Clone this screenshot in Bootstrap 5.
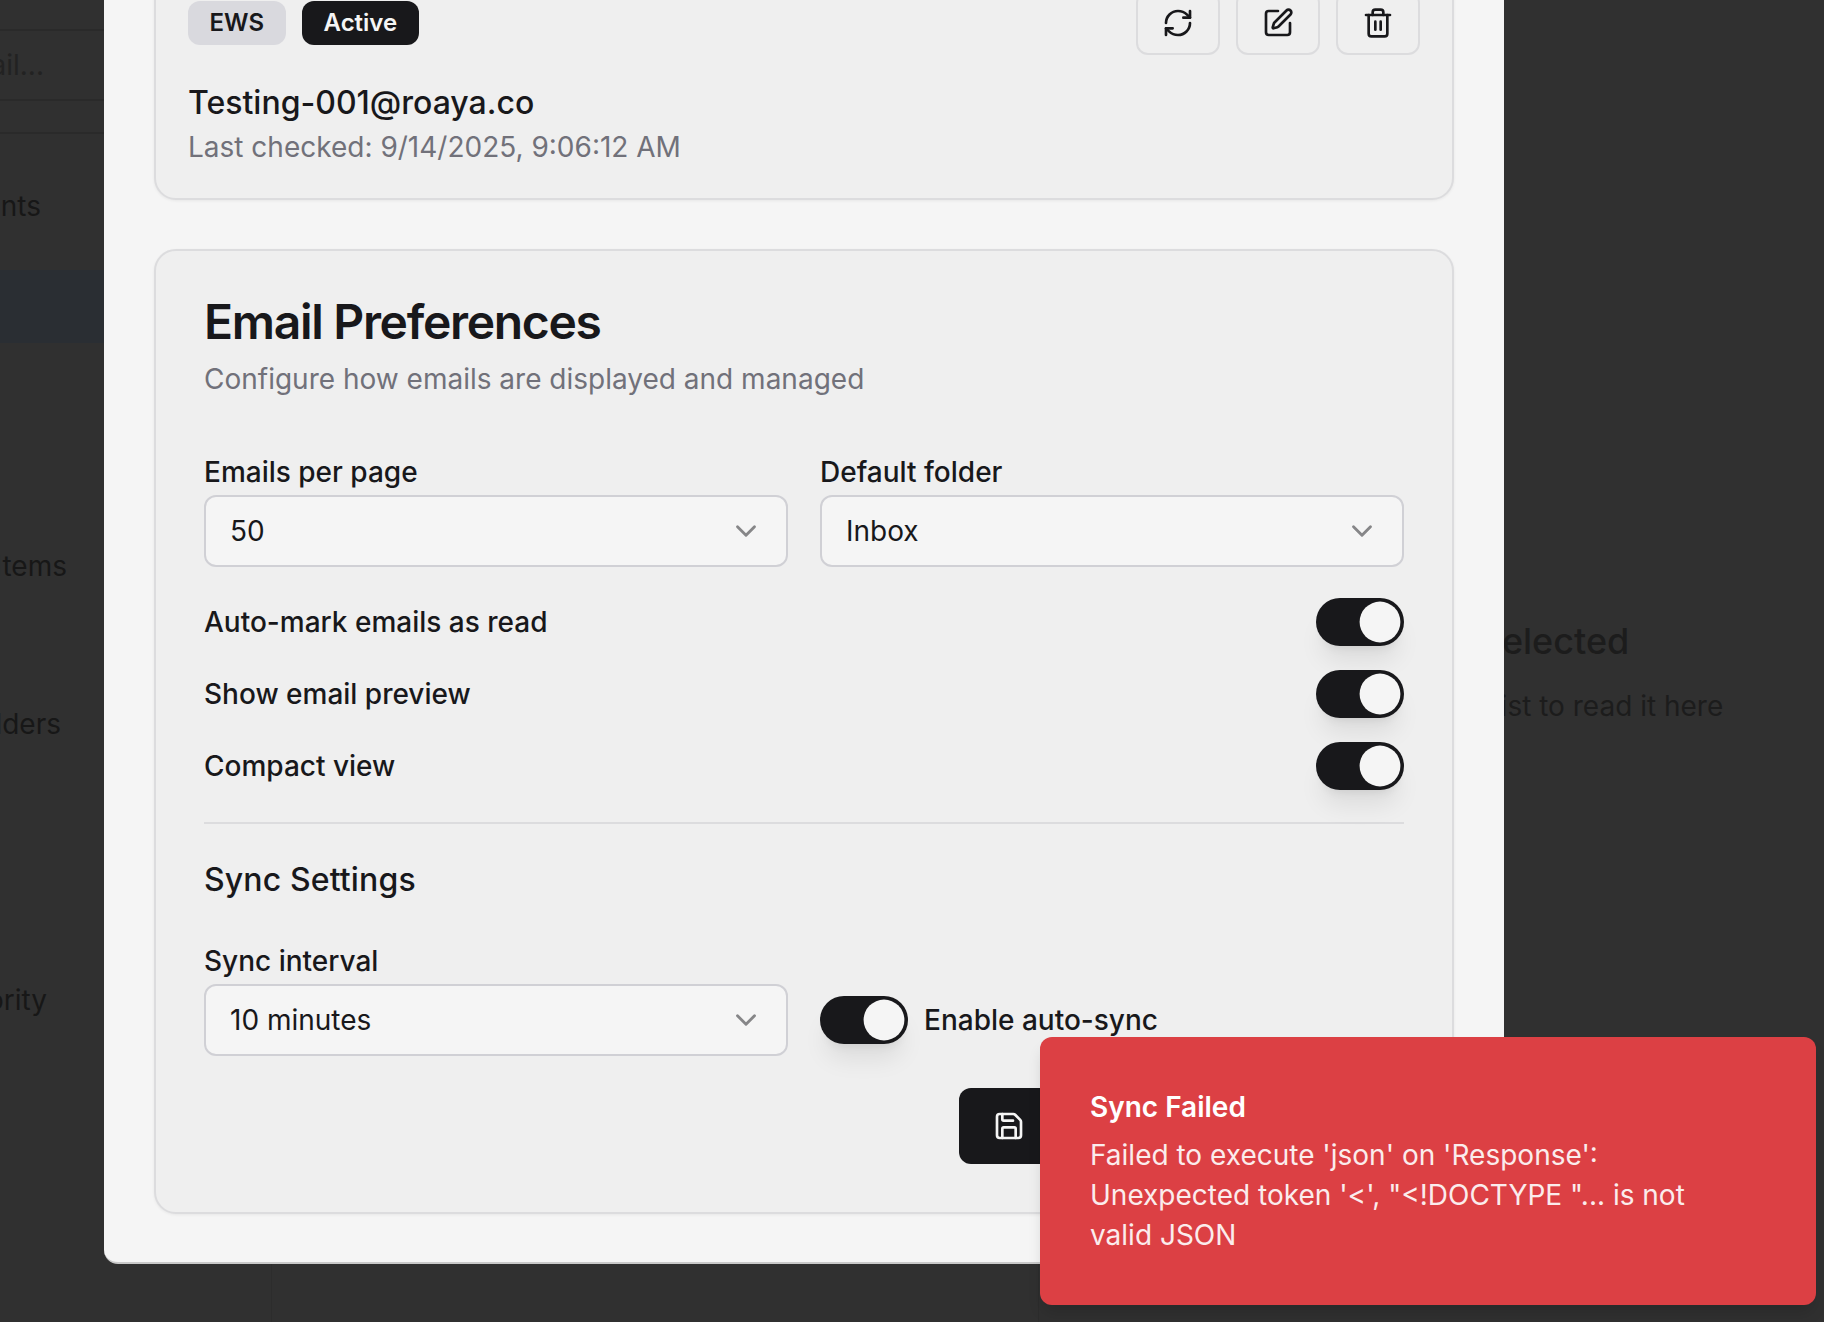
<!DOCTYPE html>
<html lang="en">
<head>
    <meta charset="UTF-8">
    <title>Settings</title>
    <link href="https://cdn.jsdelivr.net/npm/bootstrap@5.3.3/dist/css/bootstrap.min.css" rel="stylesheet">
    <style>
        html, body { height: 100%; }
        body { font-family: Inter, "Liberation Sans", sans-serif; background: #303030; color: #18181b; overflow: hidden; }

        /* app behind the backdrop */
        .app-back { height: 1322px; color: #171717; font-size: 28px; line-height: 40px; }
        .app-rail { width: 272px; border-right: 1px solid #2c2c2c; flex: none; }
        .app-list { width: 767px; border-right: 1px solid #2c2c2c; flex: none; }
        .app-pane { flex: 1; padding: 617px 0 0 26px; text-align: center; white-space: nowrap; }
        .rail-row { display: flex; justify-content: flex-end; align-items: flex-end; white-space: nowrap; overflow: hidden; width: 104px; }
        .rail-line { border-bottom: 2px solid #2a2a2a; }
        .rail-active { background: #2a2e33; width: 100%; height: 73px; }
        .r1 { height: 31px; }
        .r2 { height: 70px; padding-right: 60px; padding-bottom: 14px; color: #222; }
        .r3 { height: 33px; }
        .r4 { height: 136px; padding-right: 63px; padding-bottom: 44px; }
        .r6 { height: 243px; padding-right: 37px; }
        .r7 { height: 158px; padding-right: 43px; }
        .r8 { height: 276px; padding-right: 57px; }
        .pane-title { font-size: 36px; font-weight: 500; line-height: 48px; color: #1c1c1c; padding-left: 63px; }
        .pane-sub { font-size: 28px; line-height: 40px; margin-top: 21px; color: #1c1c1c; }

        /* modal */
        .prefs-modal { position: absolute; left: 104px; bottom: 58px; width: 1400px; background: #f5f5f5; border-radius: 14px; padding: 0 50px 48px; border-bottom: 2px solid #c9c9c9; }
        .prefs-card { background: #efefef; border: 2px solid #dcdcde; border-radius: 22px; box-shadow: 0 1px 3px rgba(0,0,0,.06); }
        .account-card { padding: 0 32px 31px; height: 340px; display: flex; flex-direction: column; justify-content: flex-end; margin-bottom: 49px; }
        .acct-badge { font-size: 24px; font-weight: 600; line-height: 44px; height: 44px; padding: 0 22px; border-radius: 12px; }
        .badge-soft { background: #d9d9de; color: #18181b; padding: 0 21.5px; }
        .badge-dark { background: #18181b; color: #f5f5f5; }
        .icon-box { width: 84px; height: 64px; border: 2px solid #dcdcde; border-radius: 12px; background: #efefef; display: flex; align-items: center; justify-content: center; padding: 0; }
        .icon-box svg { width: 32px; height: 32px; }
        .acct-mail { font-size: 32px; font-weight: 500; line-height: 44px; margin-top: 26px; }
        .acct-check { font-size: 28px; line-height: 40px; color: #71717a; margin-top: 2px; }

        .prefs-body { padding: 48px 48px 48px; height: 965px; }
        .prefs-title { font-size: 48px; font-weight: 600; line-height: 46px; letter-spacing: -1.3px; margin: 0; }
        .prefs-sub { font-size: 28px; line-height: 40px; color: #71717a; margin: 14px 0 0; }
        .field-label { font-size: 28px; font-weight: 500; line-height: 40px; margin: 0 0 3px; display: block; }
        .field-select { height: 72px; font-size: 28px; padding: 0 60px 0 24px; background-color: #f5f5f5; border: 2px solid #d0d0d5; border-radius: 12px; color: #18181b;
            background-image: url("data:image/svg+xml,%3csvg xmlns='http://www.w3.org/2000/svg' viewBox='0 0 24 24' fill='none' stroke='%2318181b' stroke-opacity='.5' stroke-width='2' stroke-linecap='round' stroke-linejoin='round'%3e%3cpath d='m6 9 6 6 6-6'/%3e%3c/svg%3e");
            background-size: 34px 34px; background-position: right 23px center; }
        .pref-list { margin-top: 19px; }
        .pref-row { height: 72px; display: flex; align-items: center; justify-content: space-between; font-size: 28px; font-weight: 500; }
        .form-switch .pill-switch { width: 88px; height: 48px; margin: 0; float: none; border: 0; border-radius: 24px; background-color: #18181b; box-shadow: 0 20px 25px -5px rgba(0,0,0,.08), 0 8px 10px -6px rgba(0,0,0,.08);
            background-image: url("data:image/svg+xml,%3csvg xmlns='http://www.w3.org/2000/svg' viewBox='-4 -4 8 8'%3e%3ccircle r='3.4' fill='%23f5f5f5'/%3e%3c/svg%3e");
            background-size: 48px 48px; background-position: 42px center; }
        .form-check.form-switch { padding: 0; min-height: 0; margin: 0; display: flex; }
        .prefs-rule { border: 0; border-top: 2px solid #dcdcde; opacity: 1; margin: 20px 0 33px; }
        .sync-title { font-size: 32px; font-weight: 500; line-height: 46px; letter-spacing: .13px; margin: 0 0 38px; }
        .save-wrap { margin-top: 32px; }
        .save-btn { width: 445px; height: 76px; background: #18181b; color: #f5f5f5; border: 0; border-radius: 12px; font-size: 28px; font-weight: 500; display: inline-flex; align-items: center; gap: 16px; padding: 0 34px; }
        .save-btn svg { width: 32px; height: 32px; }

        /* toast */
        .sync-toast { position: absolute; left: 1040px; top: 1037px; width: 776px; height: 268px; background: #dc4044; color: #fff; border-radius: 12px; padding: 50px 64px 50px 50px; box-shadow: 0 10px 15px -3px rgba(0,0,0,.15); }
        .toast-head { font-size: 28px; font-weight: 600; line-height: 40px; }
        .toast-text { font-size: 28px; line-height: 40px; opacity: .9; margin-top: 8px; }
    </style>
</head>
<body>

    <!-- app behind backdrop -->
    <div class="app-back d-flex">
        <div class="app-rail">
            <div class="rail-row r1 rail-line"></div>
            <div class="rail-row r2 rail-line">Search email...</div>
            <div class="rail-row r3 rail-line"></div>
            <div class="rail-row r4">All Accounts</div>
            <div class="rail-active"></div>
            <div class="rail-row r6">Sent Items</div>
            <div class="rail-row r7">All Folders</div>
            <div class="rail-row r8">Priority</div>
        </div>
        <div class="app-list"></div>
        <div class="app-pane">
            <div class="pane-title">No email selected</div>
            <div class="pane-sub">Select an email from the list to read it here</div>
        </div>
    </div>

    <!-- Settings modal -->
    <div class="prefs-modal">
        <div class="prefs-card account-card">
            <div class="d-flex justify-content-between align-items-center">
                <div class="d-flex gap-3">
                    <span class="acct-badge badge-soft">EWS</span>
                    <span class="acct-badge badge-dark">Active</span>
                </div>
                <div class="d-flex gap-3">
                    <button type="button" class="btn icon-box">
                        <svg viewBox="0 0 24 24" fill="none" stroke="#18181b" stroke-width="2" stroke-linecap="round" stroke-linejoin="round"><path d="M3 12a9 9 0 0 1 9-9 9.75 9.75 0 0 1 6.74 2.74L21 8"/><path d="M21 3v5h-5"/><path d="M21 12a9 9 0 0 1-9 9 9.75 9.75 0 0 1-6.74-2.74L3 16"/><path d="M8 16H3v5"/></svg>
                    </button>
                    <button type="button" class="btn icon-box">
                        <svg viewBox="0 0 24 24" fill="none" stroke="#18181b" stroke-width="2" stroke-linecap="round" stroke-linejoin="round"><path d="M12 3H5a2 2 0 0 0-2 2v14a2 2 0 0 0 2 2h14a2 2 0 0 0 2-2v-7"/><path d="M18.375 2.625a1 1 0 0 1 3 3l-9.013 9.014a2 2 0 0 1-.853.505l-2.873.84a.5.5 0 0 1-.62-.62l.84-2.873a2 2 0 0 1 .506-.852z"/></svg>
                    </button>
                    <button type="button" class="btn icon-box">
                        <svg viewBox="0 0 24 24" fill="none" stroke="#18181b" stroke-width="2" stroke-linecap="round" stroke-linejoin="round"><path d="M3 6h18"/><path d="M19 6v14a2 2 0 0 1-2 2H7a2 2 0 0 1-2-2V6"/><path d="M8 6V4a2 2 0 0 1 2-2h4a2 2 0 0 1 2 2v2"/><path d="M10 11v6"/><path d="M14 11v6"/></svg>
                    </button>
                </div>
            </div>
            <div class="acct-mail">Testing-001@roaya.co</div>
            <div class="acct-check">Last checked: 9/14/2025, 9:06:12 AM</div>
        </div>

        <div class="prefs-card prefs-body">
            <h2 class="prefs-title">Email Preferences</h2>
            <p class="prefs-sub">Configure how emails are displayed and managed</p>

            <div class="row" style="--bs-gutter-x:32px; margin-top:53px">
                <div class="col-6">
                    <label class="field-label">Emails per page</label>
                    <select class="form-select field-select"><option>50</option></select>
                </div>
                <div class="col-6">
                    <label class="field-label">Default folder</label>
                    <select class="form-select field-select"><option>Inbox</option></select>
                </div>
            </div>

            <div class="pref-list">
                <div class="pref-row">Auto-mark emails as read
                    <div class="form-check form-switch"><input class="form-check-input pill-switch" type="checkbox" role="switch" checked></div>
                </div>
                <div class="pref-row">Show email preview
                    <div class="form-check form-switch"><input class="form-check-input pill-switch" type="checkbox" role="switch" checked></div>
                </div>
                <div class="pref-row">Compact view
                    <div class="form-check form-switch"><input class="form-check-input pill-switch" type="checkbox" role="switch" checked></div>
                </div>
            </div>

            <hr class="prefs-rule">
            <h3 class="sync-title">Sync Settings</h3>

            <div class="row" style="--bs-gutter-x:32px">
                <div class="col-6">
                    <label class="field-label">Sync interval</label>
                    <select class="form-select field-select"><option>10 minutes</option></select>
                </div>
                <div class="col-6 d-flex align-items-end">
                    <div class="d-flex align-items-center pref-row justify-content-start gap-3">
                        <div class="form-check form-switch"><input class="form-check-input pill-switch" type="checkbox" role="switch" checked></div>
                        Enable auto-sync
                    </div>
                </div>
            </div>

            <div class="d-flex justify-content-end save-wrap">
                <button type="button" class="btn save-btn">
                    <svg viewBox="0 0 24 24" fill="none" stroke="currentColor" stroke-width="2" stroke-linecap="round" stroke-linejoin="round"><path d="M15.2 3a2 2 0 0 1 1.4.6l3.8 3.8a2 2 0 0 1 .6 1.4V19a2 2 0 0 1-2 2H5a2 2 0 0 1-2-2V5a2 2 0 0 1 2-2z"/><path d="M17 21v-7a1 1 0 0 0-1-1H8a1 1 0 0 0-1 1v7"/><path d="M7 3v4a1 1 0 0 0 1 1h7"/></svg>
                    Save Preferences
                </button>
            </div>
        </div>
    </div>

    <!-- Toast -->
    <div class="sync-toast">
        <div class="toast-head">Sync Failed</div>
        <div class="toast-text">Failed to execute 'json' on 'Response': Unexpected token '&lt;', "&lt;!DOCTYPE "... is not valid JSON</div>
    </div>

    <script src="https://cdn.jsdelivr.net/npm/bootstrap@5.3.3/dist/js/bootstrap.bundle.min.js"></script>
</body>
</html>
